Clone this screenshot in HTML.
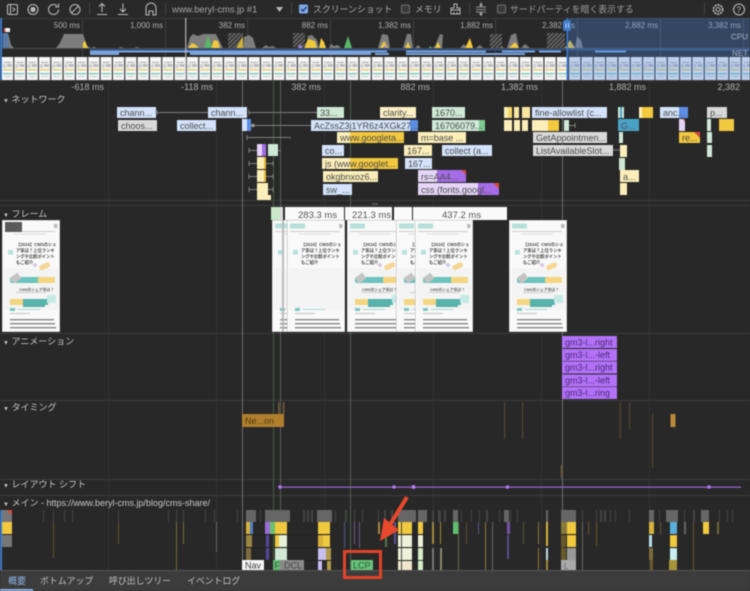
<!DOCTYPE html>
<html lang="ja"><head><meta charset="utf-8"><title>Performance</title>
<style>
html,body{margin:0;padding:0;background:#282828;width:750px;height:591px;overflow:hidden}
svg{display:block;filter:blur(.55px)}
text{font-family:"Liberation Sans","Noto Sans CJK JP",sans-serif;font-size:9px}
.b text,text.b{fill:#4c4c4c}
.r{fill:#b0b0b0;text-anchor:end;font-size:8px}
.m{fill:#b0b0b0;text-anchor:end;font-size:9px}
.h{fill:#c8c8c8;font-size:9px}
.tt{fill:#4a4a4a;font-size:4.3px;font-weight:bold}
</style></head><body>
<svg width="750" height="591" viewBox="0 0 750 591" xmlns="http://www.w3.org/2000/svg">
<defs>
<pattern id="hatch" width="3" height="3" patternUnits="userSpaceOnUse" patternTransform="rotate(45)"><rect width="3" height="3" fill="#333"/><rect width="1.3" height="3" fill="#6e6e6e"/></pattern>
<pattern id="film" x="2" y="57" width="12.33" height="23" patternUnits="userSpaceOnUse">
<rect width="11.2" height="23" fill="#f5f5f5"/><rect x="2" y="5" width="7" height="1" fill="#aaa"/><rect x="1" y="7" width="3" height="4" fill="#cfcfcf"/><rect x="5" y="7" width="5" height="3" fill="#bbb"/><rect x="1" y="12" width="9" height="1.5" fill="#eccf7a"/><rect x="1" y="16" width="9" height="1.4" fill="#7ccac4"/><rect x="2" y="19" width="7" height="1" fill="#ccc"/></pattern>
<symbol id="thumb" width="58" height="112" viewBox="0 0 58 112">
<rect width="58" height="112" fill="#f9f9f9"/><rect x=".2" y=".2" width="57.6" height="111.600" fill="none" stroke="#aaa" stroke-width=".5"/>
<rect x="3" y="3.500" width="15" height="5" fill="#b6e0db"/><rect x="52" y="4" width="3.500" height="4" fill="#bbb"/>
<rect x="3" y="11" width="50" height="1" fill="#ccc"/><rect x="12" y="13.500" width="32" height="1" fill="#ddd"/>
<rect x="6" y="30" width="5" height="4.500" fill="#b5e2dc"/>
<rect x="2" y="48" width="54" height="42" fill="#f4f4f4"/>
</symbol>
<symbol id="hero" width="58" height="112" viewBox="0 0 58 112">
<rect x="37" y="44" width="11" height="5" rx="2" fill="#f5d592" transform="rotate(-25 42 46)"/><circle cx="33" cy="45" r="2" fill="#d5c8e4"/>
<rect x="8" y="57" width="45" height="6" rx="2" fill="#6cc3bb"/><rect x="36" y="57" width="17" height="6" rx="2" fill="#f4d580"/>
<rect x="9" y="55" width="9" height="7" fill="#c4c4c4" transform="rotate(-35 13 58)"/>
<rect x="14" y="72" width="30" height="1" fill="#ccc"/>
<rect x="8" y="79" width="13" height="6" fill="#f4d580"/><rect x="21" y="79" width="25" height="6" fill="#57b4ac"/><rect x="45" y="75" width="9" height="8" fill="#c5e9e5"/>
<rect x="21" y="85" width="22" height="2" fill="#5aaca5"/>
</symbol>
<symbol id="foot" width="58" height="112" viewBox="0 0 58 112">
<rect x="8" y="88" width="5" height="3" fill="#7cc8c1"/><rect x="16" y="89" width="22" height="1" fill="#a5d9d4"/><rect x="8" y="93" width="20" height="1" fill="#c4c4c4"/>
<rect x="8" y="99" width="44" height="1.400" fill="#888"/><rect x="8" y="103" width="45" height="1.400" fill="#888"/><rect x="8" y="107" width="46" height="1.400" fill="#888"/>
</symbol>
</defs>

<rect width="750" height="591" fill="#282828"/>

<!-- toolbar -->
<rect width="750" height="18" fill="#292929"/>
<g fill="none" stroke="#b8b8b8" stroke-width="1.100">
<rect x="7.500" y="4.500" width="10" height="10" rx="1.500"/><path d="M10.500 4.500v10M12.500 7.500l2.500 2-2.500 2"/>
<circle cx="33" cy="9.500" r="5"/><circle cx="33" cy="9.500" r="2.600" fill="#b8b8b8" stroke="none"/>
<path d="M58.500 9.500a5 5 0 1 1-1.600-3.700M58.500 3.500v3.500h-3.500"/>
<circle cx="75" cy="9.500" r="5"/><path d="M71.500 13l7-7"/>
<path d="M102 12V4M99 6.500l3-3 3 3M97 14.500h10"/>
<path d="M123 3.500v8M120 9l3 3 3-3M118 14.500h10"/>
<path d="M146 15V8a5 5 0 0 1 10 0v7h-3v-4h-4v4z"/>
</g>
<g fill="#444"><rect x="89" y="3" width="1" height="12"/><rect x="165" y="3" width="1" height="12"/><rect x="291" y="3" width="1" height="12"/><rect x="469" y="3" width="1" height="12"/><rect x="704" y="3" width="1" height="12"/></g>
<text x="172" y="12.500" style="font-size:9.300px" fill="#a8a8a8">www.beryl-cms.jp #1</text>
<path d="M276 7h7l-3.500 5z" fill="#b8b8b8"/>
<rect x="299" y="4.500" width="9" height="9" rx="1.500" fill="#7fa8ea"/><path d="M301 9l2 2 3.500-4" fill="none" stroke="#15305e" stroke-width="1.200"/>
<text x="313" y="12.500" fill="#b0b0b0" style="font-size:8.900px">スクリーンショット</text>
<rect x="401.500" y="5" width="8" height="8" rx="1.500" fill="#3a3a3a" stroke="#707070"/>
<text x="415" y="12.500" fill="#b0b0b0" style="font-size:8.900px">メモリ</text>
<g fill="none" stroke="#b8b8b8" stroke-width="1"><path d="M454 4h3v4h3v2h-9V8h3zM451 10v4h9v-4M454 14v-2M457 14v-2"/>
<path d="M476 9.500h10M476 7h10M476 12h10" stroke-width=".8"/><path d="M481 2.500v3M479.500 4.500l1.500 1.500 1.500-1.500M481 16v-3M479.500 14.500l1.500-1.500 1.500 1.500"/></g>
<rect x="497.500" y="5" width="8" height="8" rx="1.500" fill="#3a3a3a" stroke="#707070"/>
<text x="510" y="12.500" fill="#a0a0a0" style="font-size:8.900px">サードパーティを暗く表示する</text>
<g fill="none" stroke="#b8b8b8" stroke-width="1.100"><circle cx="718" cy="9.500" r="2"/><circle cx="718" cy="9.500" r="4.600" stroke-dasharray="2.200 .8" stroke-width="1.600"/><circle cx="739" cy="9.500" r="5.500"/></g>
<text x="736.500" y="12.500" fill="#b8b8b8" style="font-size:8px">?</text>

<!-- overview -->
<rect y="18" width="750" height="1" fill="#3a3a3a"/>
<g fill="#404040"><rect x="82" y="19" width="1" height="38"/><rect x="165" y="19" width="1" height="38"/><rect x="247" y="19" width="1" height="38"/><rect x="330" y="19" width="1" height="38"/><rect x="413" y="19" width="1" height="38"/><rect x="495" y="19" width="1" height="38"/><rect x="577" y="19" width="1" height="38"/><rect x="660" y="19" width="1" height="38"/><rect x="743" y="19" width="1" height="38"/></g>
<text class="r" x="80" y="28">500 ms</text><text class="r" x="163" y="28">1,000 ms</text><text class="r" x="245" y="28">382 ms</text><text class="r" x="328" y="28">882 ms</text><text class="r" x="411" y="28">1,382 ms</text><text class="r" x="493" y="28">1,882 ms</text><text class="r" x="575" y="28">2,382 ms</text><text class="r" x="658" y="28">2,882 ms</text><text class="r" x="741" y="28">3,382 ms</text>
<g fill="#7d7d7d">
<path d="M3 33H8L11 45L14 48H3z"/><path d="M56 48L60 43L64 34H83L87 46L91 48z"/><path d="M92 48L94 46.500L96 48zM118 48L121 47L124 48zM134 48L137 47L140 48z"/>
<path d="M187 48L190 37L193 34L198 36L203 34L216 34L220 42L223 48z"/><path d="M243 48L244 37L249 35L253 38L256 48z"/><path d="M262 48L266 45L269 47L273 46L276 48z"/>
<path d="M306 48L308 36L312 35L317 40L319 48z"/><path d="M329 48L331 44L334 46L338 45L341 48z"/>
<path d="M378 48L382 34L388 35L390 48zM403 48L407 34L411 34L413 48zM415 48L418 45L421 48zM432 48L435 46L440 34L443 35L442 48zM460 48L464 44L467 48zM476 48L480 45L483 48zM507 48L511 35L516 33L519 48zM521 48L525 44L530 48zM575 48L577 36L581 40L583 48z"/>
</g>
<path d="M2 33H8L9 48H2z" fill="#3c76c4" opacity=".55"/><rect x="4" y="28" width="6" height="4" fill="#f4f4f4"/><rect x="4" y="28" width="1.500" height="4" fill="#e25555"/>
<g fill="#f0c93e">
<path d="M83 43L85 41L88 48H83z"/><path d="M188 48L192 43L196 45L199 48z"/><path d="M211 48L214 40L218 41L220 48z"/><path d="M304 48L308 39L315 41L317 48z"/><path d="M319 48L321 38L324 42L326 48z"/>
<path d="M380 48L384 41L388 48z"/><path d="M405 48L408 42L411 48zM435 48L438 42L441 48zM465 48L470 38L473 48zM496 48L500 42L503 48zM509 48L515 42L519 48zM565 48L570 40L575 48z"/>
</g>
<rect x="228" y="33" width="15" height="15" fill="url(#hatch)"/><rect x="293" y="33" width="12" height="14" fill="url(#hatch)"/><rect x="490" y="34" width="12" height="14" fill="url(#hatch)"/><rect x="547" y="33" width="18" height="15" fill="url(#hatch)"/>
<path d="M236 48L243 36V48z" fill="#e7c13b" opacity=".85"/>
<path d="M204 48L208 35L212 48z" fill="#58b668"/><path d="M344 48L348 36L352 48z" fill="#58b668"/><path d="M429 48L430 46L432 48z" fill="#58b668"/>
<path d="M298 48L300 44L303 48zM383 48L385 45L387 48z" fill="#a27fd8"/>
<rect y="48" width="750" height="1" fill="#4c4c4c"/>
<rect x="90" y="49" width="660" height="1.600" fill="#2a4f88"/>
<g fill="#7ba3dc"><rect x="90" y="50.500" width="285" height="2"/><rect x="90" y="52.500" width="29" height="2.500"/><rect x="190" y="52.500" width="181" height="2.500"/><rect x="375" y="50.500" width="12" height="2"/><rect x="406" y="50.500" width="80" height="2"/><rect x="375" y="53" width="14" height="2"/><rect x="406" y="53" width="83" height="2"/><rect x="481" y="53" width="44" height="2"/><rect x="502" y="50.500" width="33" height="2"/><rect x="539" y="50.500" width="22" height="2"/><rect x="595" y="50.500" width="31" height="2"/></g>
<rect y="57" width="750" height="23" fill="url(#film)"/>
<rect x="185" y="18" width="1.500" height="62" fill="#c9c9c9" opacity=".7"/>
<rect x="569" y="18" width="181" height="62" fill="#4f86dc" opacity=".33"/>
<rect x="0" y="18" width="2" height="62" fill="#3c79c6"/>
<rect x="566.500" y="18" width="1.800" height="62" fill="#3b7bd0"/><rect x="563" y="20" width="8" height="11" rx="2" fill="#3f7bcb"/><path d="M566 23v5M568.500 23v5" stroke="#d8e4f6" stroke-width=".8"/>
<text x="731" y="39.500" fill="#8392a8" style="font-size:8px;font-weight:bold">CPU</text><text x="732" y="56" fill="#8392a8" style="font-size:8px;font-weight:bold">NET</text>

<!-- ruler -->
<rect y="80" width="750" height="1" fill="#444"/>
<text class="m" x="104" y="90">-618 ms</text><text class="m" x="213" y="90">-118 ms</text><text class="m" x="321" y="90">382 ms</text><text class="m" x="430" y="90">882 ms</text><text class="m" x="538" y="90">1,382 ms</text><text class="m" x="646" y="90">1,882 ms</text><text class="m" x="740" y="90">2,382</text>
<g fill="#333"><rect x="108" y="81" width="1" height="489"/><rect x="216" y="81" width="1" height="489"/><rect x="324" y="81" width="1" height="489"/><rect x="433" y="81" width="1" height="489"/><rect x="541" y="81" width="1" height="489"/><rect x="649" y="81" width="1" height="489"/></g>

<!-- dividers -->
<g fill="#3c3c3c"><rect y="200" width="750" height="1"/><rect y="205" width="750" height="1"/><rect y="333" width="750" height="1"/><rect y="400" width="750" height="1"/><rect y="479" width="750" height="1"/><rect y="495" width="750" height="1"/></g>
<text x="372" y="204.500" fill="#aaa" style="font-size:7px;font-weight:bold">...</text>

<!-- long vertical markers, behind the tracks -->
<rect x="242" y="81" width="1" height="489" fill="#6e6e6e"/>
<rect x="273" y="81" width="1" height="489" fill="#42603f"/>
<rect x="280" y="81" width="1" height="489" fill="#5e5e5e"/>
<rect x="350" y="81" width="1" height="489" fill="#4c644e"/>
<rect x="562" y="81" width="1" height="489" fill="#6e6e6e"/>

<!-- network -->
<text class="h" x="3" y="102.500"><tspan style="font-size:6px">▼</tspan> ネットワーク</text>
<g stroke="#808080" stroke-width="1" fill="none"><path d="M157 112.500H208M157 110V115M249 112.500H317M249 110V115M251 125.500H311M247 137.500H291M247 135V140M249 150.500H257M249 148V153M278 150.500H281M249 163.500H257M249 161V166M266 163.500H273M273 161V166M249 176.500H257M249 174V179M266 176.500H273M273 174V179M249 189.500H257M249 187V192M268 189.500H273M273 187V192M569 125.500H575M575 123V128M613 150H620"/></g>
<circle cx="253" cy="125.500" r="1.800" fill="#999"/>
<g class="b">
<rect x="117" y="107" width="39" height="11" fill="#d4e3fb"/><text x="120" y="116">chann...</text>
<rect x="208" y="107" width="39" height="11" fill="#d4e3fb"/><text x="211" y="116">chann...</text>
<rect x="317" y="107" width="27" height="11" fill="#cfe9d6"/><text x="320" y="116">33...</text>
<rect x="380" y="107" width="36" height="11" fill="#fdf0c4"/><text x="383" y="116">clarity...</text>
<rect x="432" y="107" width="33" height="11" fill="#cfe9d6"/><text x="435" y="116">1670...</text>
<rect x="504" y="107" width="8" height="11" fill="#f5d668"/><rect x="504" y="107" width="4" height="11" fill="#fbeeb8"/>
<rect x="514" y="107" width="5" height="11" fill="#f9e6a0"/><rect x="522" y="107" width="8" height="11" fill="#f9e6a0"/>
<rect x="532" y="107" width="75" height="11" fill="#d4e3fb"/><text x="535" y="116">fine-allowlist (c...</text>
<rect x="618" y="107" width="6" height="11" fill="#cfe9d6"/><rect x="620" y="107" width="2" height="11" fill="#4aa3c7"/>
<rect x="639" y="107" width="14" height="11" fill="#f2c83e"/><rect x="639" y="107" width="3" height="11" fill="#fbeeb8"/>
<rect x="660" y="107" width="28" height="11" fill="#d4e3fb"/><rect x="679" y="107" width="9" height="11" fill="#5c8ee6"/><text x="663" y="116">anc...</text>
<rect x="707" y="107" width="20" height="11" fill="#d8d8d8"/><text x="710" y="116">p...</text>

<rect x="118" y="120" width="39" height="11" fill="#d9d9d9"/><text x="121" y="129">choos...</text>
<rect x="177" y="120" width="39" height="11" fill="#d4e3fb"/><text x="180" y="129">collect...</text>
<rect x="242" y="119" width="9" height="12" fill="#d4e3fb"/><rect x="247" y="119" width="4" height="12" fill="#5c8ee6"/>
<rect x="311" y="120" width="107" height="11" fill="#d4e3fb"/><rect x="410" y="120" width="8" height="11" fill="#5c8ee6"/><text x="314" y="129">AcZssZ3j1YR6z4XGk27...</text>
<rect x="432" y="120" width="53" height="11" fill="#cfe9d6"/><rect x="479" y="120" width="6" height="11" fill="#7cc98e"/><text x="435" y="129">16706079...</text>
<rect x="504" y="120" width="8" height="11" fill="#fbeeb8"/><rect x="514" y="120" width="6" height="11" fill="#fbeeb8"/><rect x="522" y="120" width="6" height="11" fill="#fbeeb8"/>
<rect x="532" y="120" width="27" height="11" fill="#fbeeb8"/><rect x="548" y="120" width="11" height="11" fill="#f2c83e"/>
<rect x="564" y="120" width="5" height="11" fill="#cfe9d6"/>
<rect x="618" y="119" width="21" height="12" fill="#4aa3c7"/><text x="621" y="129">G...</text>
<rect x="679" y="119" width="6" height="12" fill="#e5d6f7"/><path d="M679 119h4l2 3v-3z" fill="#d94a3c"/>
<rect x="707" y="119" width="4" height="12" fill="#cfe9d6"/><rect x="719" y="119" width="15" height="12" fill="#f2c83e"/>

<rect x="337" y="132" width="67" height="11" fill="#f2c83e"/><rect x="337" y="132" width="13" height="11" fill="#fbeeb8"/><text x="340" y="141">www.googleta...</text>
<rect x="418" y="132" width="48" height="11" fill="#fbeeb8"/><text x="421" y="141">m=base ...</text>
<rect x="533" y="132" width="74" height="11" fill="#d9d9d9"/><text x="536" y="141">GetAppointmen...</text>
<rect x="619" y="132" width="4" height="11" fill="#cfe9d6"/>
<rect x="679" y="132" width="21" height="11" fill="#f2c83e"/><path d="M694 132h6v6z" fill="#d94a3c"/><text x="682" y="141">re...</text>
<rect x="707" y="132" width="5" height="11" fill="#cfe9d6"/>

<rect x="257" y="144" width="9" height="12" fill="#e5d6f7"/><rect x="262" y="144" width="4" height="12" fill="#a56ce8"/>
<rect x="268" y="144" width="10" height="12" fill="#cfe9d6"/>
<rect x="322" y="145" width="22" height="11" fill="#d4e3fb"/><text x="325" y="154">co...</text>
<rect x="404" y="145" width="28" height="11" fill="#fbeeb8"/><text x="407" y="154">167...</text>
<rect x="442" y="145" width="50" height="11" fill="#d4e3fb"/><text x="445" y="154">collect (a...</text>
<rect x="533" y="145" width="80" height="11" fill="#d9d9d9"/><text x="536" y="154">ListAvailableSlot...</text>
<rect x="620" y="145" width="7" height="12" fill="#fbeeb8"/>
<rect x="707" y="145" width="5" height="12" fill="#cfe9d6"/>

<rect x="257" y="157" width="9" height="12" fill="#fbeeb8"/><rect x="264" y="157" width="2" height="12" fill="#e8b93a"/>
<rect x="322" y="158" width="76" height="11" fill="#f2c83e"/><rect x="322" y="158" width="28" height="11" fill="#fbeeb8"/><text x="325" y="167">js (www.googlet...</text>
<rect x="405" y="158" width="27" height="11" fill="#d4e3fb"/><text x="408" y="167">167...</text>
<rect x="619" y="158" width="6" height="12" fill="#cfe9d6"/>

<rect x="257" y="170" width="9" height="12" fill="#fbeeb8"/><rect x="264" y="170" width="2" height="12" fill="#e8b93a"/>
<rect x="323" y="171" width="55" height="11" fill="#fbeeb8"/><text x="326" y="180">okgbnxoz6...</text>
<rect x="418" y="170" width="48" height="12" fill="#e5d6f7"/><rect x="437" y="170" width="29" height="12" fill="#a56ce8"/><path d="M461 170h5v5z" fill="#d94a3c"/><text x="421" y="180">rs=AA4...</text>
<rect x="620" y="170" width="19" height="12" fill="#fbeeb8"/><text x="623" y="180">a...</text>

<rect x="257" y="183" width="11" height="12" fill="#fbeeb8"/>
<rect x="323" y="184" width="29" height="11" fill="#d4e3fb"/><text x="326" y="193">sw_...</text>
<rect x="418" y="183" width="81" height="12" fill="#e5d6f7"/><rect x="478" y="183" width="21" height="12" fill="#a56ce8"/><path d="M493 183h6v6z" fill="#d94a3c"/><text x="421" y="193">css (fonts.googl...</text>
<rect x="620" y="183" width="7" height="12" fill="#fbeeb8"/>
<rect x="257" y="195" width="14" height="5" fill="#fbeeb8"/>
</g>

<!-- frames -->
<text class="h" x="3" y="217"><tspan style="font-size:6px">▼</tspan> フレーム</text>
<rect x="271" y="207" width="9" height="13" fill="#c8e8c8"/><rect x="280" y="207" width="3" height="13" fill="#ddd"/>
<rect x="285" y="207" width="59" height="13" fill="#fafafa"/><rect x="345" y="207" width="47" height="13" fill="#fafafa"/><rect x="394" y="207" width="18" height="13" fill="#fafafa"/><rect x="413" y="207" width="94" height="13" fill="#fafafa"/>
<text x="298" y="218" fill="#555" style="font-size:9.500px">283.3 ms</text><text x="352" y="218" fill="#555" style="font-size:9.500px">221.3 ms</text><text x="442" y="218" fill="#555" style="font-size:9.500px">437.2 ms</text>

<!-- thumb 1 -->
<use href="#thumb" x="2" y="220"/><use href="#hero" x="2" y="220"/><use href="#foot" x="2" y="220"/><rect x="5" y="222" width="17" height="10" fill="#5a5a5a"/>
<text class="tt" x="16" y="246">【2024】CMSのシェ<tspan x="16" dy="6">ア率は？上位ランキ</tspan><tspan x="16" dy="6">ングや比較ポイント</tspan><tspan x="16" dy="6">もご紹介</tspan></text>
<text x="19" y="291" fill="#666" style="font-size:3.800px;font-weight:bold">CMSのシェア率は？</text>
<!-- thumb strip -->
<use href="#thumb" x="272" y="220"/><use href="#foot" x="272" y="220"/><rect x="282" y="220" width="2" height="112" fill="#bbb"/>
<!-- thumb 2 -->
<use href="#thumb" x="287" y="220"/><use href="#foot" x="287" y="220"/>
<text class="tt" x="301" y="246">【2024】CMSのシェ<tspan x="301" dy="6">ア率は？上位ランキ</tspan><tspan x="301" dy="6">ングや比較ポイント</tspan><tspan x="301" dy="6">もご紹介</tspan></text>
<!-- thumb 3 -->
<use href="#thumb" x="347" y="220"/><use href="#hero" x="347" y="220"/><use href="#foot" x="347" y="220"/>
<text class="tt" x="361" y="246">【2024】CMSのシェ<tspan x="361" dy="6">ア率は？上位ランキ</tspan><tspan x="361" dy="6">ングや比較ポイント</tspan><tspan x="361" dy="6">もご紹介</tspan></text>
<text x="362" y="291" fill="#666" style="font-size:3.800px;font-weight:bold">CMSのシェア率は？</text>
<!-- thumb 4 -->
<use href="#thumb" x="396" y="220"/><use href="#hero" x="396" y="220"/><use href="#foot" x="396" y="220"/>
<text class="tt" x="410" y="246">【2024】CMSのシェ<tspan x="410" dy="6">ア率は？上位ランキ</tspan><tspan x="410" dy="6">ングや比較ポイント</tspan><tspan x="410" dy="6">もご紹介</tspan></text>
<!-- thumb 5 -->
<use href="#thumb" x="415" y="220"/><use href="#hero" x="415" y="220"/><use href="#foot" x="415" y="220"/>
<text class="tt" x="429" y="246">【2024】CMSのシェ<tspan x="429" dy="6">ア率は？上位ランキ</tspan><tspan x="429" dy="6">ングや比較ポイント</tspan><tspan x="429" dy="6">もご紹介</tspan></text>
<text x="430" y="291" fill="#666" style="font-size:3.800px;font-weight:bold">CMSのシェア率は？</text>
<!-- thumb 6 -->
<use href="#thumb" x="509" y="220"/><use href="#hero" x="509" y="220"/><use href="#foot" x="509" y="220"/>
<text class="tt" x="523" y="246">【2024】CMSのシェ<tspan x="523" dy="6">ア率は？上位ランキ</tspan><tspan x="523" dy="6">ングや比較ポイント</tspan><tspan x="523" dy="6">もご紹介</tspan></text>
<text x="524" y="291" fill="#666" style="font-size:3.800px;font-weight:bold">CMSのシェア率は？</text>

<!-- animations -->
<text class="h" x="3" y="344.500"><tspan style="font-size:6px">▼</tspan> アニメーション</text>
<g fill="#b271f7"><rect x="562" y="336" width="55" height="12"/><rect x="562" y="349" width="55" height="12"/><rect x="562" y="361.500" width="55" height="12"/><rect x="562" y="374.500" width="55" height="12"/><rect x="562" y="387" width="55" height="12"/></g>
<text x="565" y="345.500" fill="#4a2a7a">gm3-l...right</text><text x="565" y="358" fill="#4a2a7a">gm3-l...-left</text><text x="565" y="370.500" fill="#4a2a7a">gm3-l...right</text><text x="565" y="383.500" fill="#4a2a7a">gm3-l...-left</text><text x="565" y="396" fill="#4a2a7a">gm3-l...ring</text>

<!-- timings -->
<text class="h" x="3" y="410.500"><tspan style="font-size:6px">▼</tspan> タイミング</text>
<rect x="242" y="414" width="42" height="13" fill="#b07f2c"/><rect x="278" y="402" width="1.500" height="12" fill="#6e5a32"/><rect x="283" y="402" width="1.200" height="12" fill="#8a6e35"/>
<text x="245" y="424" fill="#4e3a12">Ne...on</text>
<g fill="#4e4731"><rect x="504" y="402" width="1.200" height="37"/><rect x="522" y="402" width="1.200" height="37"/><rect x="619.500" y="402" width="1.200" height="37"/><rect x="629" y="402" width="1.200" height="27"/><rect x="652" y="414" width="1.200" height="54"/></g>
<rect x="670.500" y="414" width="5" height="13" fill="#b8893a"/>
<rect x="560.500" y="465" width="2" height="13" fill="#5d5038"/>

<!-- layout shift -->
<text class="h" x="3" y="487.500"><tspan style="font-size:6px">▼</tspan> レイアウト シフト</text>
<rect x="280" y="486.500" width="461" height="1.300" fill="#9362c9"/>
<g fill="#b27cf0"><circle cx="280" cy="487" r="1.800"/><circle cx="394" cy="487" r="1.800"/><circle cx="413.500" cy="487" r="2"/><circle cx="507.500" cy="487" r="1.800"/><circle cx="709" cy="487" r="1.800"/></g>

<!-- main -->
<text class="h" x="3" y="506"><tspan style="font-size:6px">▼</tspan> メイン - https://www.beryl-cms.jp/blog/cms-share/</text>
<rect x="0" y="510" width="2" height="60" fill="#3f7bcb"/>
<rect x="2" y="510" width="10" height="12" fill="#777"/><path d="M7 510h5v5z" fill="#d94a3c"/>
<rect x="2" y="522" width="10" height="12" fill="#f2c83e"/><rect x="2" y="535" width="10" height="12" fill="#777"/>
<g fill="#444">
<rect x="43" y="510" width="1" height="12"/><rect x="53" y="510" width="1" height="12"/><rect x="64" y="510" width="1" height="12"/><rect x="72" y="510" width="1" height="12"/><rect x="118" y="510" width="1" height="12"/><rect x="168" y="510" width="1" height="12"/><rect x="176" y="510" width="1" height="12"/><rect x="183" y="510" width="1" height="12"/><rect x="205" y="510" width="1" height="12"/><rect x="214" y="510" width="1" height="12"/><rect x="237" y="510" width="1" height="12"/><rect x="260" y="510" width="1" height="12"/>
<rect x="303" y="510" width="2" height="12"/><rect x="307" y="510" width="2" height="12"/><rect x="311" y="510" width="2" height="12"/><rect x="335" y="510" width="1" height="12"/><rect x="345" y="510" width="2" height="12"/><rect x="354" y="510" width="1" height="12"/><rect x="362" y="510" width="1" height="12"/>
<rect x="378" y="510" width="1" height="12"/><rect x="384" y="510" width="2" height="12"/><rect x="391" y="510" width="2" height="12"/><rect x="432" y="510" width="2" height="12"/><rect x="438" y="510" width="3" height="12"/><rect x="444" y="510" width="2" height="12"/><rect x="461" y="510" width="1" height="12"/><rect x="471" y="510" width="1" height="12"/><rect x="479" y="510" width="1" height="12"/><rect x="486" y="510" width="2" height="12"/><rect x="499" y="510" width="1" height="12"/><rect x="510" y="510" width="1" height="12"/><rect x="517" y="510" width="1" height="12"/><rect x="582" y="510" width="1" height="12"/><rect x="596" y="510" width="1" height="12"/><rect x="600" y="510" width="2" height="12"/><rect x="604" y="510" width="2" height="12"/><rect x="610" y="510" width="1" height="12"/><rect x="615" y="510" width="1" height="12"/><rect x="629" y="510" width="1" height="12"/><rect x="659" y="510" width="1" height="12"/><rect x="684" y="510" width="1" height="12"/><rect x="693" y="510" width="2" height="12"/><rect x="719" y="510" width="1" height="12"/><rect x="727" y="510" width="1" height="12"/><rect x="732" y="510" width="1" height="12"/>
</g>
<g fill="#666"><rect x="246" y="510" width="10" height="12"/><rect x="265" y="510" width="25" height="12"/><rect x="317" y="510" width="15" height="12"/><rect x="398" y="510" width="18" height="12"/><rect x="418" y="510" width="9" height="12"/><rect x="453" y="510" width="5" height="12"/><rect x="504" y="510" width="5" height="12"/><rect x="546" y="510" width="2" height="12"/><rect x="561" y="510" width="15" height="12"/><rect x="649" y="510" width="5" height="12"/><rect x="666" y="510" width="12" height="12"/><rect x="701" y="510" width="8" height="12"/></g>
<g>
<rect x="53" y="522" width="1" height="36" fill="#5c5528"/><rect x="118" y="522" width="1" height="22" fill="#5c5528"/><rect x="176" y="522" width="1" height="48" fill="#776b3a"/><rect x="183" y="522" width="1" height="22" fill="#776b3a"/><rect x="216" y="522" width="1" height="30" fill="#666"/>
<rect x="246" y="522" width="7" height="12" fill="#d8b03a"/><rect x="250" y="522" width="3" height="12" fill="#4d7fc8"/><rect x="246" y="535" width="6" height="12" fill="#9a8540"/><rect x="246" y="548" width="5" height="12" fill="#7d6d3c"/>
<rect x="265" y="522" width="5" height="12" fill="#9a6cd8"/><rect x="270" y="522" width="5" height="12" fill="#6cc070"/><rect x="275" y="522" width="12" height="12" fill="#f0c93e"/>
<rect x="266" y="535" width="3" height="12" fill="#55479a"/><rect x="266" y="548" width="3" height="12" fill="#55479a"/>
<rect x="275" y="535" width="10" height="12" fill="#f0c93e"/><rect x="279" y="535" width="8" height="12" fill="#e4f1d8"/><rect x="275" y="548" width="12" height="12" fill="#cfe9d6"/><rect x="274" y="560" width="13" height="10" fill="#cfe9d6"/>
<rect x="318" y="522" width="12" height="12" fill="#f0c93e"/><rect x="318" y="535" width="5" height="12" fill="#d8b03a"/><rect x="323" y="535" width="7" height="12" fill="#f0c93e"/><rect x="318" y="548" width="8" height="12" fill="#c8bff0"/><rect x="326" y="548" width="5" height="12" fill="#b19a4a"/><rect x="318" y="561" width="4" height="9" fill="#c8bff0"/><rect x="327" y="561" width="4" height="9" fill="#b19a4a"/>
<rect x="344" y="522" width="1" height="26" fill="#4d5a88"/><rect x="354" y="522" width="1" height="22" fill="#6a5a8a"/><rect x="359" y="522" width="1" height="26" fill="#6a5a8a"/>
<rect x="378" y="522" width="2" height="12" fill="#a08a3a"/><rect x="385" y="535" width="2" height="12" fill="#557a4d"/><rect x="394" y="522" width="2" height="22" fill="#595098"/>
<rect x="398" y="522" width="14" height="12" fill="#f0c93e"/><rect x="398" y="535" width="14" height="12" fill="#eef2d8"/><rect x="398" y="548" width="14" height="12" fill="#eef2d8"/><rect x="398" y="561" width="14" height="9" fill="#efe6cc"/>
<rect x="401" y="522" width="1" height="48" fill="#444"/>
<rect x="418" y="522" width="5" height="12" fill="#f0c93e"/><rect x="418" y="535" width="5" height="12" fill="#eef2d8"/><rect x="418" y="548" width="5" height="22" fill="#d5ecc8"/><rect x="432" y="522" width="2" height="22" fill="#a08a3a"/><rect x="432" y="548" width="2" height="22" fill="#777"/><rect x="440" y="522" width="1" height="22" fill="#a08a3a"/><rect x="440" y="548" width="2" height="22" fill="#8a8a6a"/>
<rect x="453" y="522" width="5" height="12" fill="#5cc070"/><rect x="458" y="522" width="1" height="48" fill="#6a6a4a"/><rect x="466" y="522" width="1" height="22" fill="#5a4e30"/>
<rect x="478" y="522" width="1" height="12" fill="#4d5a88"/><rect x="485" y="522" width="1" height="48" fill="#8a7a3a"/><rect x="492" y="522" width="1" height="48" fill="#666"/>
<rect x="507" y="522" width="3" height="12" fill="#7453a8"/><rect x="507" y="535" width="2" height="24" fill="#5a4a8a"/><rect x="523" y="522" width="1" height="22" fill="#5a5a3a"/>
<rect x="538" y="522" width="1" height="22" fill="#8a7a3a"/><rect x="538" y="548" width="1" height="22" fill="#8a7a3a"/>
<rect x="546" y="522" width="2" height="24" fill="#d8b03a"/><rect x="546" y="548" width="2" height="12" fill="#b6e0e8"/><rect x="546" y="560" width="2" height="10" fill="#a08a3a"/>
<rect x="561" y="522" width="6" height="12" fill="#8a7a3a"/><rect x="567" y="522" width="9" height="12" fill="#f0c93e"/><rect x="561" y="535" width="5" height="12" fill="#6a5a2a"/><rect x="567" y="535" width="9" height="12" fill="#f0c93e"/><rect x="561" y="548" width="5" height="12" fill="#6a5a2a"/><rect x="567" y="548" width="9" height="12" fill="#999"/><rect x="561" y="560" width="15" height="10" fill="#aaa"/>
<rect x="582" y="522" width="1" height="48" fill="#666"/><rect x="588" y="522" width="1" height="12" fill="#6a5a2a"/><rect x="596" y="522" width="1" height="24" fill="#6a5a2a"/>
<rect x="649" y="522" width="5" height="12" fill="#d8b03a"/><rect x="649" y="535" width="3" height="12" fill="#b6e0e8"/><rect x="649" y="548" width="4" height="12" fill="#7a6a3a"/><rect x="650" y="560" width="3" height="10" fill="#6a5a2a"/>
<rect x="660" y="522" width="1" height="12" fill="#6a5a2a"/><rect x="670" y="522" width="7" height="12" fill="#5aaedc"/><rect x="670" y="535" width="7" height="12" fill="#f0c93e"/><rect x="670" y="548" width="7" height="12" fill="#c8eef0"/><rect x="669" y="560" width="8" height="10" fill="#a8923a"/>
<rect x="684" y="522" width="2" height="12" fill="#666"/><rect x="693" y="522" width="1" height="48" fill="#6a5a2a"/><rect x="703" y="522" width="6" height="12" fill="#f0c93e"/><rect x="717" y="522" width="2" height="12" fill="#6a6a3a"/>
</g>
<g fill="#222"><rect x="246" y="534.300" width="84" height=".8"/><rect x="398" y="534.300" width="30" height=".8"/><rect x="246" y="547.300" width="84" height=".8"/><rect x="398" y="547.300" width="30" height=".8"/><rect x="246" y="560" width="84" height=".8"/><rect x="398" y="560" width="30" height=".8"/><rect x="561" y="534.300" width="16" height=".8"/><rect x="670" y="534.300" width="8" height=".8"/><rect x="670" y="547.300" width="8" height=".8"/></g>
<text x="564" y="569" fill="#666" style="font-size:8px">L</text>
<!-- markers -->
<rect x="242" y="560" width="22" height="10" fill="#f4f4f4"/><text x="245" y="568.500" fill="#444">Nav</text>
<rect x="273" y="560" width="7" height="10" fill="#63bb74"/><text x="274.500" y="568.500" fill="#3c5a40">F</text>
<rect x="280" y="560" width="24" height="10" fill="#8a8a8a"/><text x="284" y="568.500" fill="#444">DCL</text>
<rect x="351" y="560" width="22" height="10" fill="#67c378"/><text x="353" y="568.500" fill="#2e5a38">LCP</text>

<!-- bottom tabs -->
<rect y="570" width="750" height="21" fill="#3c3c3c"/><rect y="570" width="750" height="1" fill="#555"/>
<text x="8" y="584" fill="#8fb5ea" style="font-size:9px">概要</text><rect x="0" y="589" width="33" height="2" fill="#8fb5ea"/>
<text x="40" y="584" fill="#c4c4c4" style="font-size:8.900px">ボトムアップ</text><text x="109" y="584" fill="#c4c4c4" style="font-size:8.900px">呼び出しツリー</text><text x="187" y="584" fill="#c4c4c4" style="font-size:8.900px">イベントログ</text>

<!-- annotation -->
<rect x="344.500" y="551.500" width="36" height="26" fill="none" stroke="#e3432a" stroke-width="3"/>
<path d="M407 497L388 528" stroke="#e8492c" stroke-width="4" fill="none"/><path d="M380 541L384 518L399 530z" fill="#e8492c"/>
</svg>
</body></html>
